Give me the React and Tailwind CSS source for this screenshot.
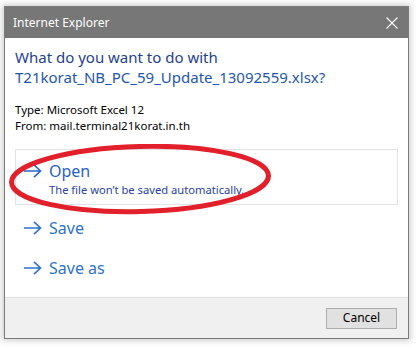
import React from "react";

const Arrow = ({ color = "#2a66cc" }) => (
  <svg width="19" height="14" viewBox="0 0 19 14" className="shrink-0">
    <path d="M1 7 H17.5 M11 0.8 L17.5 7 L11 13.2" fill="none" stroke={color} strokeWidth="1.6" />
  </svg>
);

export default function App() {
  const font = { fontFamily: '"Noto Sans", "Open Sans", sans-serif' };
  return (
    <div className="w-[416px] h-[349px] bg-white overflow-hidden" style={font}>
      <div className="ml-[4px] mt-[6px] w-[405px] h-[333px] flex flex-col border border-[#7a7a7a] shadow-[0_0_6px_2px_rgba(0,0,0,0.18)] bg-white relative">
        <div className="h-[31px] bg-[#777777] flex items-center justify-between pl-[8px] pr-[10px] shrink-0">
          <span className="text-white text-[12px] leading-none">Internet Explorer</span>
          <svg width="12" height="12" viewBox="0 0 12 12">
            <path d="M0.5 0.5 L11.5 11.5 M11.5 0.5 L0.5 11.5" stroke="#ffffff" strokeWidth="1.1" />
          </svg>
        </div>
        <div className="flex-1 flex flex-col px-[10px] pt-[9px]">
          <div className="text-[15px] leading-[20px]">
            <div className="text-[#1f3f91]">What do you want to do with</div>
            <div className="text-[#1f56ae]">T21korat_NB_PC_59_Update_13092559.xlsx?</div>
          </div>
          <div className="mt-[15px] text-[11.5px] leading-[16px] text-black">
            <div>Type: Microsoft Excel 12</div>
            <div>From: mail.terminal21korat.in.th</div>
          </div>
          <div className="mt-[15px] flex flex-col">
            <div className="h-[56px] border border-[#e3e3e3] pl-[7px] pt-[10px]">
              <div className="flex items-center gap-[7px] h-[22px]">
                <Arrow />
                <span className="text-[16px] leading-[22px] text-[#2a5fc8]">Open</span>
              </div>
              <div className="pl-[26px] text-[11.2px] leading-[16px] text-[#2a3fa8]">
                The file won’t be saved automatically.
              </div>
            </div>
            <div className="mt-[3px] h-[40px] flex items-center gap-[7px] pl-[8px]">
              <Arrow color="#2f6fcf" />
              <span className="text-[16px] leading-[22px] text-[#2f72cf]">Save</span>
            </div>
            <div className="h-[40px] flex items-center gap-[7px] pl-[8px]">
              <Arrow color="#2f6fcf" />
              <span className="text-[16px] leading-[22px] text-[#2f72cf]">Save as</span>
            </div>
          </div>
        </div>
        <div className="h-[41px] shrink-0 bg-[#f0f0f0] border-t border-[#dfdfdf] flex items-center justify-end pr-[11px]">
          <button className="w-[71px] h-[21px] bg-[#e1e1e1] border border-[#adadad] text-[12px] leading-none text-black">
            Cancel
          </button>
        </div>
        <svg className="absolute left-[2px] top-[137px] pointer-events-none" width="268" height="76" viewBox="0 0 268 76">
          <ellipse cx="133" cy="35" rx="128.5" ry="32.5" fill="none" stroke="#e1202b" strokeWidth="5" transform="rotate(-1.5 133 35)" />
        </svg>
      </div>
    </div>
  );
}
